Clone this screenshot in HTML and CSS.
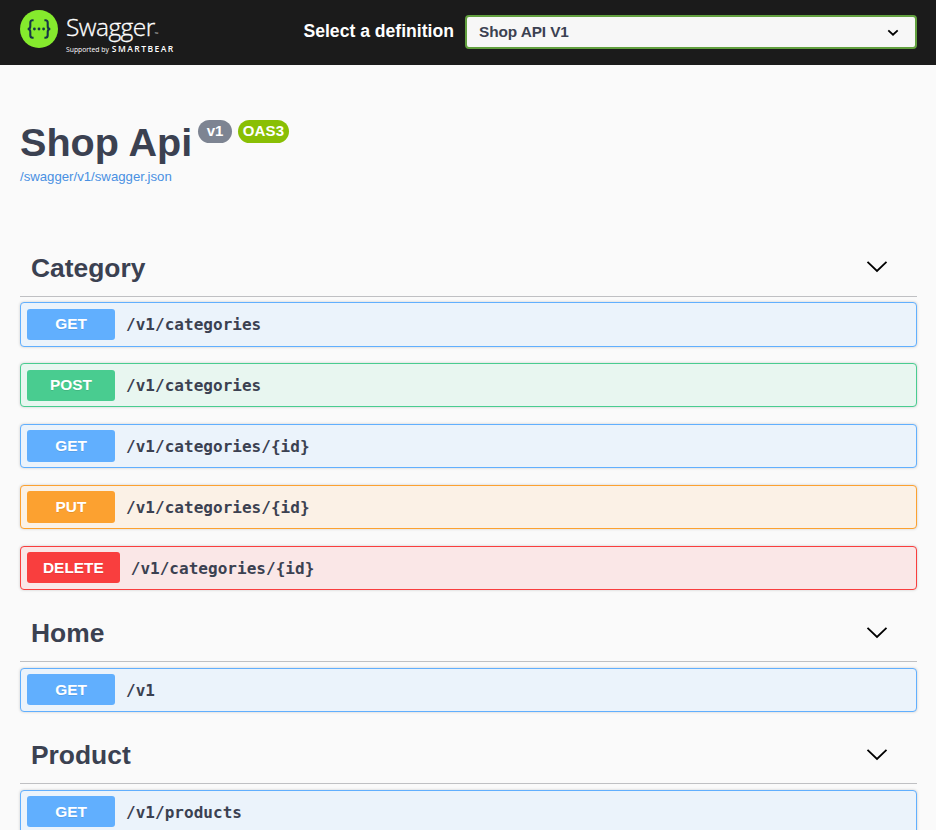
FILE: index.html
```
<!DOCTYPE html>
<html lang="en">
<head>
<meta charset="utf-8">
<title>Swagger UI</title>
<link rel="stylesheet" href="styles.css">
</head>
<body>
<header class="topbar">
  <a class="brand">
    <svg class="logo" viewBox="0 0 38 38" aria-hidden="true">
      <circle cx="19" cy="19" r="19" fill="#85ea2d"/>
      <g fill="none" stroke="#173647" stroke-width="2.1">
        <path d="M13.6 10.3h-1c-1.8 0-2.3.9-2.3 2.5v3.4c0 1.7-.7 2.8-2.6 2.8 1.9 0 2.6 1.1 2.6 2.8v3.4c0 1.6.5 2.5 2.3 2.5h1"/>
        <path d="M24.4 10.3h1c1.8 0 2.3.9 2.3 2.5v3.4c0 1.7.7 2.8 2.6 2.8-1.9 0-2.6 1.1-2.6 2.8v3.4c0 1.6-.5 2.5-2.3 2.5h-1"/>
      </g>
      <g fill="#173647"><circle cx="14.4" cy="19" r="1.4"/><circle cx="19" cy="19" r="1.4"/><circle cx="23.6" cy="19" r="1.4"/></g>
    </svg>
    <span class="wordmark">
      <span class="name">Swagger<span class="tm">™</span></span>
      <span class="support">Supported by <b>SMARTBEAR</b></span>
    </span>
  </a>
  <div class="picker">
    <span class="picker-label">Select a definition</span>
    <div class="select"><span>Shop API V1</span>
      <svg width="12" height="8" viewBox="0 0 12 8"><path d="M1.3 1.3 6 5.7l4.7-4.4" fill="none" stroke="#000" stroke-width="1.8"/></svg>
    </div>
  </div>
</header>
<main class="content">
  <section class="info">
    <h1>Shop Api</h1><span class="badge version">v1</span><span class="badge oas">OAS3</span>
  </section>
  <a class="link">/swagger/v1/swagger.json</a>

  <section class="tag first">
    <div class="tag-head"><h2>Category</h2><svg class="chev" viewBox="0 0 22 14"><path d="M1.5 1.8 11 11l9.5-9.2" /></svg></div>
    <div class="op get"><span class="method">GET</span><span class="path">/v1/categories</span></div>
    <div class="op post"><span class="method">POST</span><span class="path">/v1/categories</span></div>
    <div class="op get"><span class="method">GET</span><span class="path">/v1/categories/{id}</span></div>
    <div class="op put"><span class="method">PUT</span><span class="path">/v1/categories/{id}</span></div>
    <div class="op delete"><span class="method">DELETE</span><span class="path">/v1/categories/{id}</span></div>
  </section>
  <section class="tag">
    <div class="tag-head"><h2>Home</h2><svg class="chev" viewBox="0 0 22 14"><path d="M1.5 1.8 11 11l9.5-9.2" /></svg></div>
    <div class="op get"><span class="method">GET</span><span class="path">/v1</span></div>
  </section>
  <section class="tag">
    <div class="tag-head"><h2>Product</h2><svg class="chev" viewBox="0 0 22 14"><path d="M1.5 1.8 11 11l9.5-9.2" /></svg></div>
    <div class="op get"><span class="method">GET</span><span class="path">/v1/products</span></div>
  </section>
</main>
</body>
</html>
```
FILE: styles.css
```
* { box-sizing: border-box; }
html, body { height: 830px; overflow: hidden; }
body { margin: 0; background: #fafafa; color: #3b4151; font-family: "Liberation Sans", Arial, sans-serif; }
h1, h2 { margin: 0; }
svg { display: block; }

.topbar { height: 65px; background: #1b1b1b; display: flex; justify-content: space-between; padding: 0 19px 0 20px; }
.brand { display: flex; gap: 8px; padding-top: 10px; color: #fff; }
.logo { width: 38px; height: 38px; }
.wordmark { display: flex; flex-direction: column; font-family: "Open Sans", sans-serif; padding-top: 2px; }
.name { font-size: 24.5px; line-height: 30px; height: 32px; font-weight: 300; letter-spacing: -0.55px; white-space: nowrap; -webkit-text-stroke: 0.3px #fff; }
.tm { font-size: 5px; line-height: 1; letter-spacing: 0; -webkit-text-stroke: 0; }
.support { font-size: 6.8px; line-height: 10px; height: 10px; white-space: nowrap; display: flex; align-items: baseline; }
.support b { font-size: 8.5px; line-height: 10px; font-weight: 600; letter-spacing: 1.45px; margin-left: 3px; }
.picker { display: flex; align-items: flex-start; padding-top: 15px; }
.picker-label { color: #fff; font-size: 17.6px; font-weight: 700; line-height: 32px; margin-right: 11px; white-space: nowrap; }
.select { width: 452px; height: 34px; border: 2px solid #62a03f; border-radius: 4px; background: #f7f7f7; display: flex; align-items: center; justify-content: space-between; padding: 0 16px 0 12px; font-size: 15.4px; font-weight: 700; letter-spacing: -0.1px; }
.select svg { margin-top: 2px; }

.content { padding: 55px 19px 0 20px; }
.info { display: flex; align-items: flex-start; height: 48px; }
.info h1 { font-size: 39.6px; line-height: 45px; width: 178px; white-space: nowrap; }
.badge { height: 23px; line-height: 22px; border-radius: 12px; color: #fff; font-size: 15px; font-weight: 700; text-align: center; }
.version { width: 34px; background: #7d8492; margin-right: 6px; }
.oas { width: 51px; background: #89bf04; letter-spacing: 0.2px; }
.link { display: block; height: 18px; line-height: 18px; font-size: 13.2px; color: #4990e2; }

.tag { padding-top: 13px; }
.tag.first { padding-top: 52px; }
.tag-head { height: 59px; border-bottom: 1px solid #bfc0c3; margin-bottom: 6px; padding: 2px 29px 0 11px; display: flex; align-items: center; justify-content: space-between; }
.tag.first .tag-head { margin-bottom: 5px; }
h2 { font-size: 26.4px; line-height: 30px; }
.chev { width: 22px; height: 14px; margin-bottom: 2px; fill: none; stroke: #000; stroke-width: 1.8; }
.tag:not(.first) .chev { margin-bottom: 0; }
.op { height: 44px; border: 1px solid; border-radius: 4px; box-shadow: 0 0 3px rgba(0,0,0,.19); display: flex; align-items: flex-start; padding: 5px 6px; }
.op + .op { margin-top: 17px; }
.tag.first .tag-head + .op { height: 45px; margin-bottom: -1px; padding-top: 6px; }
.op.post { padding-top: 6px; }
.method { min-width: 88px; height: 32px; line-height: 31px; padding: 0 16px; border-radius: 3px; color: #fff; font-size: 15.4px; font-weight: 700; text-align: center; text-shadow: 0 1px 0 rgba(0,0,0,.1); }
.tag.first .tag-head + .op .method, .post .method { height: 31px; line-height: 30px; }
.path { font: 700 16px/20px "DejaVu Sans Mono", monospace; letter-spacing: 0.03px; margin: 6px 0 0 11px; }
.get { border-color: #61affe; background: #ebf3fb; }
.get .method { background: #61affe; }
.post { border-color: #49cc90; background: #e8f6f0; }
.post .method { background: #49cc90; }
.put { border-color: #fca130; background: #fbf1e6; }
.put .method { background: #fca130; }
.delete { border-color: #f93e3e; background: #fae7e7; }
.delete .method { background: #f93e3e; }
.delete .method, .tag:not(.first) .method { height: 31px; }
.delete .path, .put .path, .post ~ .get .path, .tag:not(.first) .path { margin-top: 7px; }
```
